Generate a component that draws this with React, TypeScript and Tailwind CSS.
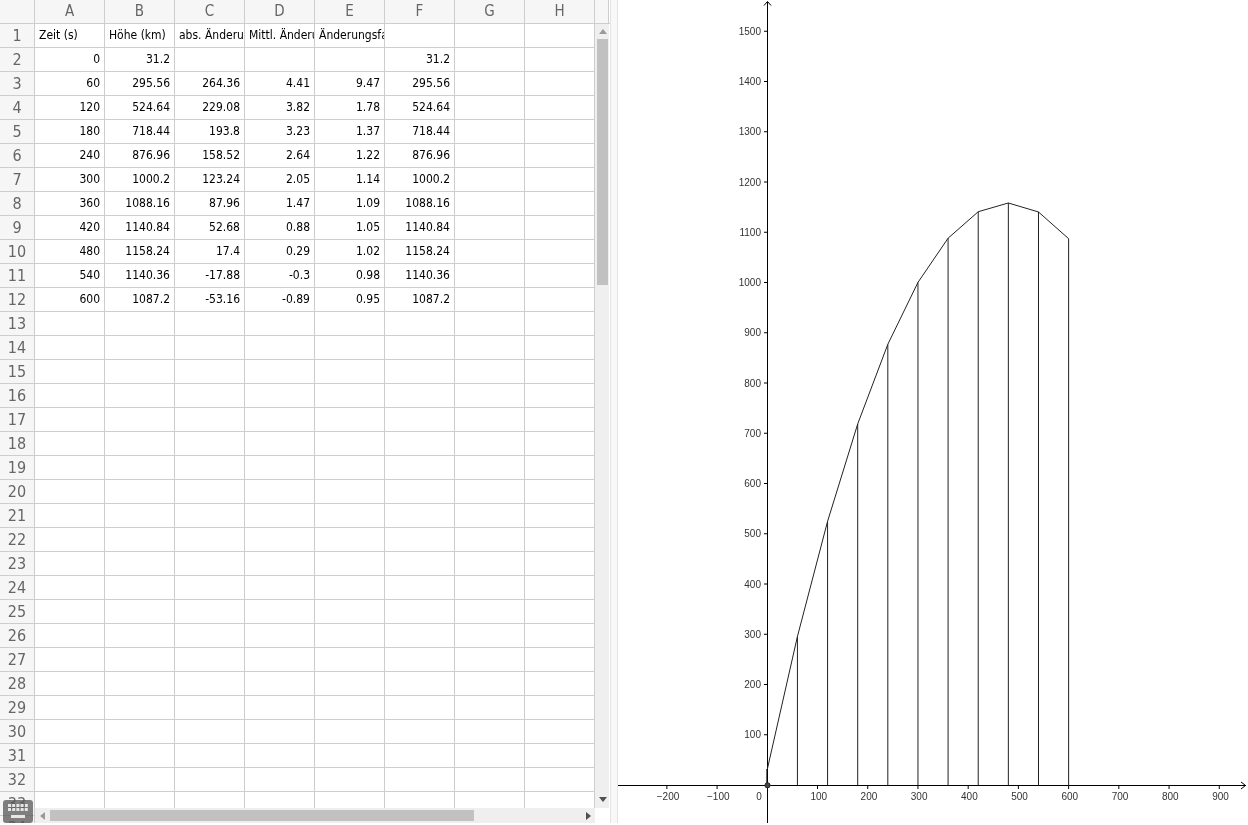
import { Fragment } from 'react';

const columns = ['A', 'B', 'C', 'D', 'E', 'F', 'G', 'H'];

const rows: string[][] = [
  ['Zeit (s)', 'Höhe (km)', 'abs. Änderung', 'Mittl. Änderung', 'Änderungsfaktor', '', '', ''],
  ['0', '31.2', '', '', '', '31.2', '', ''],
  ['60', '295.56', '264.36', '4.41', '9.47', '295.56', '', ''],
  ['120', '524.64', '229.08', '3.82', '1.78', '524.64', '', ''],
  ['180', '718.44', '193.8', '3.23', '1.37', '718.44', '', ''],
  ['240', '876.96', '158.52', '2.64', '1.22', '876.96', '', ''],
  ['300', '1000.2', '123.24', '2.05', '1.14', '1000.2', '', ''],
  ['360', '1088.16', '87.96', '1.47', '1.09', '1088.16', '', ''],
  ['420', '1140.84', '52.68', '0.88', '1.05', '1140.84', '', ''],
  ['480', '1158.24', '17.4', '0.29', '1.02', '1158.24', '', ''],
  ['540', '1140.36', '-17.88', '-0.3', '0.98', '1140.36', '', ''],
  ['600', '1087.2', '-53.16', '-0.89', '0.95', '1087.2', '', ''],
];

const rowCount = 34;
const rowNumbers = Array.from({ length: rowCount }, (_, i) => i + 1);

const points = rows.slice(1).map((r) => [Number(r[0]), Number(r[1])]);

// graph view: pixel position inside the panel, panel starts at x=618
const px = (x: number) => 149.3 + x * 0.5022;
const py = (y: number) => 785 - y * 0.5025;

const xTicks = [-200, -100, 100, 200, 300, 400, 500, 600, 700, 800, 900];
const yTicks = [100, 200, 300, 400, 500, 600, 700, 800, 900, 1000, 1100, 1200, 1300, 1400, 1500];

function Graph() {
  const curve = points.map(([x, y]) => `${px(x)},${py(y)}`).join(' ');
  return (
    <svg width="630" height="823" className="block" fontFamily="'Liberation Sans', Arial, sans-serif">
      <line x1="0" y1="785.5" x2="628" y2="785.5" stroke="#000" />
      <line x1="149.5" y1="2" x2="149.5" y2="823" stroke="#000" />
      <path d="M146 5.5 L149.5 1.5 L153 5.5" fill="none" stroke="#000" />
      <path d="M623 782 L627.5 785.5 L623 789" fill="none" stroke="#000" />
      {xTicks.map((t) => (
        <Fragment key={t}>
          <line x1={px(t)} y1="785" x2={px(t)} y2="789" stroke="#000" />
          <text x={px(t) + 1.2} y="799.5" fontSize="10" fill="#333" textAnchor="middle">
            {t < 0 ? `\u2212${-t}` : t}
          </text>
        </Fragment>
      ))}
      <text x="141" y="799.5" fontSize="10" fill="#333" textAnchor="middle">
        0
      </text>
      {yTicks.map((t) => (
        <Fragment key={t}>
          <line x1="146" y1={py(t)} x2="149.5" y2={py(t)} stroke="#000" />
          <text x="143" y={py(t) + 3.5} fontSize="10" fill="#333" textAnchor="end">
            {t}
          </text>
        </Fragment>
      ))}
      {points.slice(1).map(([x, y]) => (
        <line key={x} x1={px(x)} y1={py(y)} x2={px(x)} y2="785.5" stroke="#222" />
      ))}
      <polyline points={curve} fill="none" stroke="#222" />
      <line x1="148.5" y1="769" x2="148.5" y2="785" stroke="#666" />
      <circle cx="149.5" cy="785.3" r="2.6" fill="#444" stroke="#222" />
    </svg>
  );
}

function KeyboardIcon() {
  const keys = [0, 1, 2, 3, 4];
  return (
    <svg width="22" height="18" viewBox="0 0 22 18">
      {[1, 5].map((y) =>
        keys.map((k) => <rect key={`${y}-${k}`} x={1 + k * 4.2} y={y} width="3" height="3" fill="#e6e6e6" />),
      )}
      <rect x="4" y="12" width="14" height="3" fill="#e6e6e6" />
    </svg>
  );
}

export default function App() {
  return (
    <div className="flex h-[823px] w-[1248px] overflow-hidden will-change-transform font-['DejaVu_Sans_Condensed','DejaVu_Sans',sans-serif] font-stretch-condensed">
      <div className="relative flex w-[610px] shrink-0 flex-col">
        {/* column header */}
        <div className="flex h-6 shrink-0 border-b border-[#cdcdcd] text-[15px] text-[#666]">
          <div className="w-[35px] shrink-0 border-r border-[#cdcdcd] bg-[#f6f6f6]" />
          {columns.map((c) => (
            <div key={c} className="flex w-[70px] shrink-0 items-center justify-center border-r border-[#cdcdcd] bg-[#f6f6f6]">
              {c}
            </div>
          ))}
          <div className="w-[14px] shrink-0 border-r border-[#cdcdcd] bg-[#f6f6f6]" />
        </div>

        <div className="flex min-h-0 flex-1">
          {/* row header */}
          <div className="w-[35px] shrink-0 overflow-hidden border-r border-[#cdcdcd] bg-[#f6f6f6] text-base text-[#666]">
            {rowNumbers.map((n) => (
              <div key={n} className="flex h-6 items-center justify-center border-b border-[#cdcdcd]">
                {n}
              </div>
            ))}
          </div>

          <div className="flex min-w-0 flex-1 flex-col">
            <div className="flex min-h-0 flex-1">
              {/* cells */}
              <div className="w-[560px] shrink-0 overflow-hidden border-r border-[#cdcdcd] text-xs text-black">
                {rowNumbers.map((n, i) => (
                  <div key={n} className="flex h-6 border-b border-[#cdcdcd]">
                    {columns.map((c, j) => {
                      const value = rows[i]?.[j] ?? '';
                      return (
                        <div
                          key={c}
                          className={`flex w-[70px] shrink-0 items-center overflow-hidden whitespace-nowrap border-r border-[#cdcdcd] px-1 pb-[2px] last:border-r-0 ${
                            i === 0 ? 'justify-start' : 'justify-end'
                          }`}
                        >
                          {value}
                        </div>
                      );
                    })}
                  </div>
                ))}
              </div>
              {/* vertical scrollbar */}
              <div className="flex w-[14px] shrink-0 flex-col items-center bg-[#efefef] pl-[1px] pt-[5px]">
                <div className="h-0 w-0 border-x-[4px] border-b-[5px] border-x-transparent border-b-[#9a9a9a]" />
                <div className="mt-[5px] h-[246px] w-[11px] bg-[#c1c1c1]" />
                <div className="mt-auto mb-[6px] h-0 w-0 border-x-[4px] border-t-[5px] border-x-transparent border-t-[#505050]" />
              </div>
            </div>
            {/* horizontal scrollbar */}
            <div className="flex h-[15px] shrink-0">
              <div className="flex w-[560px] items-center bg-[#efefef] pl-[5px]">
                <div className="h-0 w-0 border-y-[4px] border-r-[5px] border-y-transparent border-r-[#9a9a9a]" />
                <div className="ml-[5px] h-[11px] w-[424px] bg-[#c1c1c1]" />
                <div className="ml-auto mr-[4px] h-0 w-0 border-y-[4px] border-l-[5px] border-y-transparent border-l-[#505050]" />
              </div>
            </div>
          </div>
        </div>

        {/* virtual keyboard button */}
        <div className="absolute bottom-0 left-[3px] flex h-[23px] w-[30px] items-center justify-center rounded-[3px] bg-[#555]/75">
          <KeyboardIcon />
        </div>
      </div>

      {/* splitter */}
      <div className="w-2 shrink-0 border-x border-[#e4e4e4] bg-[#f8f8f8]" />

      <div className="min-w-0 flex-1">
        <Graph />
      </div>
    </div>
  );
}
